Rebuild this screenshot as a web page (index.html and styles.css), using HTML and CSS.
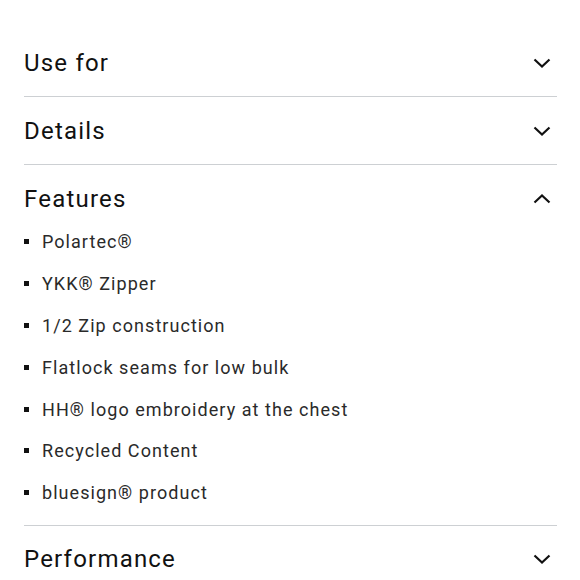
FILE: index.html
```html
<!DOCTYPE html>
<html>
<head>
<meta charset="utf-8">
<link rel="stylesheet" href="styles.css">
</head>
<body>
<div class="accordion">
  <section class="item">
    <div class="head"><span class="title">Use for</span>
      <svg class="chev" width="18" height="10" viewBox="0 0 18 10"><path d="M1.5 1.5 L9 8.5 L16.5 1.5" fill="none" stroke="#111" stroke-width="2.2"/></svg>
    </div>
  </section>
  <section class="item">
    <div class="head"><span class="title">Details</span>
      <svg class="chev" width="18" height="10" viewBox="0 0 18 10"><path d="M1.5 1.5 L9 8.5 L16.5 1.5" fill="none" stroke="#111" stroke-width="2.2"/></svg>
    </div>
  </section>
  <section class="item open">
    <div class="head"><span class="title">Features</span>
      <svg class="chev" width="18" height="10" viewBox="0 0 18 10"><path d="M1.5 8.5 L9 1.5 L16.5 8.5" fill="none" stroke="#111" stroke-width="2.2"/></svg>
    </div>
    <ul class="list">
      <li>Polartec®</li>
      <li>YKK® Zipper</li>
      <li>1/2 Zip construction</li>
      <li>Flatlock seams for low bulk</li>
      <li>HH® logo embroidery at the chest</li>
      <li>Recycled Content</li>
      <li>bluesign® product</li>
    </ul>
  </section>
  <section class="item">
    <div class="head"><span class="title">Performance</span>
      <svg class="chev" width="18" height="10" viewBox="0 0 18 10"><path d="M1.5 1.5 L9 8.5 L16.5 1.5" fill="none" stroke="#111" stroke-width="2.2"/></svg>
    </div>
  </section>
</div>
</body>
</html>
```
FILE: styles.css
```css
html, body {
  margin: 0;
  padding: 0;
  background: #fff;
}
body {
  font-family: Roboto, "Liberation Sans", sans-serif;
  color: #111;
}
.accordion {
  padding: 29px 23px 0 24px;
}
.item {
  border-bottom: 1px solid #cdd0d3;
}
.head {
  height: 67px;
  display: flex;
  align-items: center;
  justify-content: space-between;
}
.title {
  font-size: 24px;
  letter-spacing: 1.2px;
  color: #111;
}
.chev {
  margin-right: 6px;
}
.list {
  list-style: none;
  margin: -11px 0 0 0;
  padding: 0 0 11px 0;
}
.list li {
  display: flex;
  align-items: center;
  height: 41.8px;
  font-size: 18px;
  letter-spacing: 1.05px;
  color: #2a2a2a;
}
.list li::before {
  content: "";
  width: 5px;
  height: 5px;
  background: #111;
  margin-right: 13px;
  flex: none;
}
```
